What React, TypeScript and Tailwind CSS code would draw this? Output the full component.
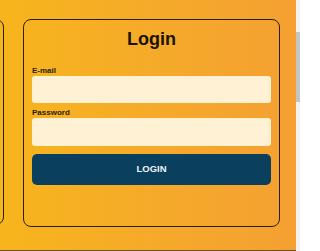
import React from "react";

function Card({ className = "", children }: { className?: string; children?: React.ReactNode }) {
    return (
        <section className={`shrink-0 w-[257px] border border-[#2b1f0c] rounded-lg ${className}`}>
            {children}
        </section>
    );
}

export default function App() {
    return (
        <div className="w-[300px] h-[251px] flex overflow-hidden font-['Liberation_Sans',Arial,sans-serif]">
            <main className="flex-1 flex flex-col overflow-hidden bg-linear-to-r from-[#f7b51b] to-[#f4a032]">
                <div className="flex-1 flex items-start gap-[19px] pt-[19px] -ml-[253px]">
                    <Card className="h-[206px]" />
                    <Card className="h-[208px] px-2 pt-[9px] flex flex-col">
                        <h1 className="text-[18px] leading-5 font-bold text-center text-[#1a1408]">Login</h1>
                        <label className="mt-[17px] text-[8px] leading-[10px] font-bold text-[#2a1f0a]">E-mail</label>
                        <input className="h-[27px] w-full rounded-[3px] bg-[#fff1d3] outline-none" />
                        <label className="mt-[5px] text-[8px] leading-[10px] font-bold text-[#2a1f0a]">Password</label>
                        <input type="password" className="h-[28px] w-full rounded-[3px] bg-[#fff1d3] outline-none" />
                        <button className="mt-2 h-[31px] w-full rounded-[5px] bg-[#0a3f5e] text-[9.5px] font-bold text-[#eef3f6]">
                            LOGIN
                        </button>
                    </Card>
                </div>
                <span className="h-px bg-[#6b5222]" />
            </main>
            <aside className="w-1 bg-[#f1f1f1] pt-8">
                <div className="h-[70px] bg-[#c4c4c4]" />
            </aside>
        </div>
    );
}
